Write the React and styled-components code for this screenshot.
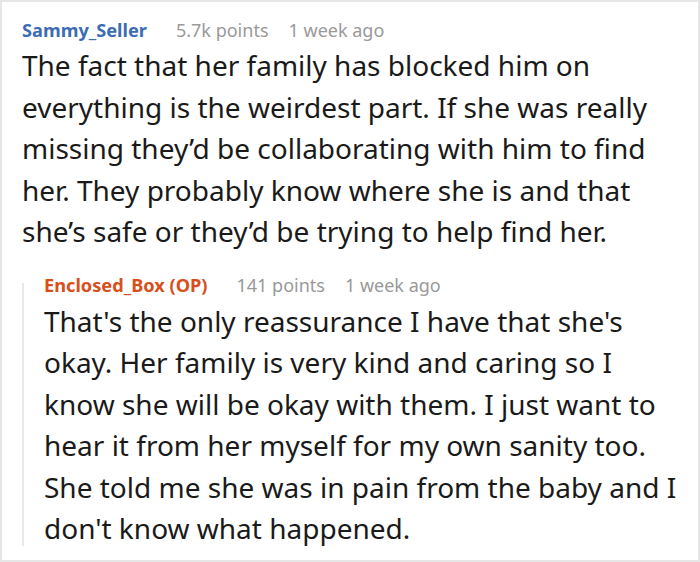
import React from "react";
import styled, { createGlobalStyle } from "styled-components";

const GlobalStyle = createGlobalStyle`
  html, body {
    margin: 0;
    padding: 0;
    background: #ffffff;
  }
  * {
    box-sizing: border-box;
  }
`;

const Frame = styled.div`
  width: 700px;
  height: 562px;
  border: 2px solid #e6e6e6;
  padding: 16px 20px 0 20px;
  font-family: "Noto Sans", "Open Sans", sans-serif;
  color: #1a1a1b;
  overflow: hidden;
`;

const Comment = styled.div`
  display: flex;
  flex-direction: column;
`;

const Reply = styled(Comment)`
  position: relative;
  margin-top: 20px;
  padding-left: 22px;

  &::before {
    content: "";
    position: absolute;
    left: 0;
    top: 10px;
    bottom: 4px;
    width: 2px;
    background: #e8e8e8;
  }
`;

const Meta = styled.div`
  display: flex;
  align-items: baseline;
  font-size: 18px;
  line-height: 24px;
  white-space: nowrap;
`;

const Author = styled.span`
  font-weight: 700;
  font-size: 18.2px;
  color: ${(p) => (p.$op ? "#d94f1c" : "#3b6cb4")};
  margin-right: 29px;
`;

const Info = styled.span`
  color: #999999;
  margin-right: 20px;
`;

const Body = styled.p`
  margin: ${(p) => (p.$reply ? "4px" : "3px")} 0 0 0;
  font-size: 28px;
  line-height: 41.5px;
  color: #1a1a1a;
  white-space: nowrap;
`;

const App = () => {
  return (
    <>
      <GlobalStyle />
      <Frame>
        <Comment>
          <Meta>
            <Author>Sammy_Seller</Author>
            <Info>5.7k points</Info>
            <Info>1 week ago</Info>
          </Meta>
          <Body>
            The fact that her family has blocked him on
            <br />
            everything is the weirdest part. If she was really
            <br />
            missing they’d be collaborating with him to find
            <br />
            her. They probably know where she is and that
            <br />
            she’s safe or they’d be trying to help find her.
          </Body>
        </Comment>
        <Reply>
          <Meta>
            <Author $op>Enclosed_Box (OP)</Author>
            <Info>141 points</Info>
            <Info>1 week ago</Info>
          </Meta>
          <Body $reply>
            That's the only reassurance I have that she's
            <br />
            okay. Her family is very kind and caring so I
            <br />
            know she will be okay with them. I just want to
            <br />
            hear it from her myself for my own sanity too.
            <br />
            She told me she was in pain from the baby and I
            <br />
            don't know what happened.
          </Body>
        </Reply>
      </Frame>
    </>
  );
};

export default App;
